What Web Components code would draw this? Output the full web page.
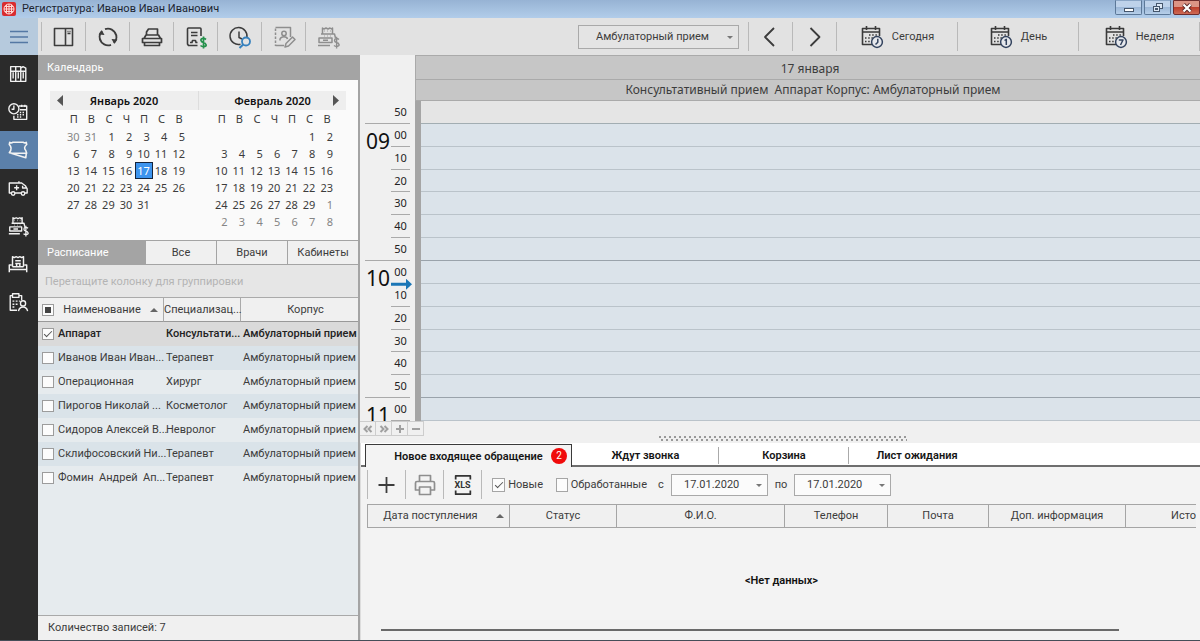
<!DOCTYPE html>
<html lang="ru">
<head>
<meta charset="utf-8">
<meta name="viewport" content="width=device-width, initial-scale=1">
<title>Регистратура</title>
<style>
html, body { height: 100%; margin: 0; }
body { font: 11px/16px Roboto, "Noto Sans", sans-serif; color: #3c3c3c; background: #f0f0f0; }
</style>
</head>
<body>
<registry-app></registry-app>

<script>
const BASE = `
  *, *::before, *::after { box-sizing: border-box; }
  button, input, select { font: inherit; color: inherit; margin: 0; border-radius: 0; }
  button { border: 0; padding: 0; background: none; }
  a { color: inherit; text-decoration: none; }
  table { border-collapse: separate; border-spacing: 0; table-layout: fixed; }
  th, td { padding: 0; font-weight: inherit; }
`;

function define(name, css, html) {
  const template = document.createElement('template');
  customElements.define(name, class extends HTMLElement {
    constructor() {
      super();
      this.attachShadow({ mode: 'open' });
    }
    connectedCallback() {
      const markup = typeof html === 'function' ? html(this) : html;
      template.innerHTML = `<style>${BASE}${css}</style>${markup}`;
      this.shadowRoot.replaceChildren(template.content.cloneNode(true));
    }
  });
}

const calendarIcon = mark => `
  <g stroke="#3a3a3a" stroke-width="1.6"><path d="M12 19.500H2.500V3.500H19.500V11M2.500 7H19.500M6.500 1V5M15.500 1V5"/></g>
  <g stroke="#3a3a3a" stroke-width="1.500" stroke-dasharray="1.500 1.700"><path d="M9 10H17M5 13H13M5 16.500H11"/></g>
  <circle cx="17" cy="17" r="5.400" fill="#e6e8ec" stroke="#33435e" stroke-width="1.500"/>
  <g stroke="#33435e" stroke-width="1.500">${mark}</g>`;

const ICONS = {
  menu: '<path d="M3 6.500H21M3 12H21M3 17.500H21"/>',
  layout: '<path d="M2.500 3.500H20.500V20.500H2.500ZM13.500 3.500V20.500M15.500 6.500H16.500M17.500 6.500H18.500M15.500 8.500H18.500" stroke-width="1.600"/>',
  refresh: '<path d="M5.300 17A8.300 8.300 0 0 1 6 6M9 4.200A8.300 8.300 0 0 1 20 10M18.900 7.200A8.300 8.300 0 0 1 18 18M15 19.800A8.300 8.300 0 0 1 4 14" stroke-width="1.800"/><path d="M2.500 9.500L6 5.500L8.500 10ZM15.500 14L21.500 14.500L18 18.500Z" fill="currentColor" stroke="none"/>',
  printer: '<path d="M6.500 10V7L8.500 4H17.500V10M4 13.500L6 10H18.500L20.500 13.500M2.500 13.500H21.500V17.500H2.500ZM4.500 17.500V20.500H19.500V17.500" stroke-width="1.700"/>',
  invoice: '<path d="M13.500 20.500H4.500L3.500 19V4Q3.500 3 4.500 3H16Q17 3 17 4V11M7 7.500H13.500M7 10.500H13.500M6 17.500H8L8.500 15.500H11.500L12 17.500H13.500" stroke-width="1.600"/><path d="M22 14.500Q20.500 13.200 18.500 13.500T17 15.500T19.300 17.500T22 19.600T19.500 21.700Q17.800 21.700 16.500 20.500M19.500 11.500V23.500" stroke="#25914c" stroke-width="1.700"/>',
  history: '<path d="M18.900 12.500A8.500 8.500 0 1 0 12.500 19.300M11 6.500V12.500L14 14" stroke-width="1.500"/><circle cx="18" cy="16.500" r="4" stroke="#3580bd" stroke-width="1.800"/><path d="M15.200 19.500L11.500 23" stroke="#3580bd" stroke-width="2"/>',
  contact: '<path d="M3.500 3.500V21" stroke-dasharray="2.500 1.500"/><path d="M3.500 2.500H18.500V12M3.500 20.500H12"/><circle cx="12" cy="8.500" r="2.200"/><path d="M8 15.500V14Q9 11.800 12 11.800T15.500 14M13 22L14 18.500L20.500 12L23 14.500L16.500 21Z"/>',
  register: '<path d="M6.500 9V3L8 4L10 3L12 4L14 3L15.500 4L16.500 3V9M5 9H18.500L19.500 13M3 17.500V13H16V17.500ZM2 20.500H14M8 6H8.500M11 6H11.500M14 6H14.500M8 11H8.500M11 11H11.500M14 11H14.500M7 15.300H12" stroke-width="1.500"/><path d="M23 14.500Q21.500 13.300 20 13.600T18.500 15.500T20.500 17.500T23 19.500T20.700 21.500Q19.200 21.500 18 20.500M20.600 11.800V23.500" stroke-width="1.400"/>',
  binders: '<path d="M4 4H9.500V20H4ZM9.500 4H15V20H9.500ZM15 5.500L17.500 4L20.500 5.500V20H15ZM4 9H20.500M6.700 10V17M12.300 10V17M17.700 10V17" stroke-width="1.500"/>',
  clockcal: '<circle cx="7.500" cy="8.500" r="5.500"/><path d="M7.500 5V9H5M13 5.500H21.500V20H7.500V16M14 9.500H21M16 4V6.500M19.500 4V6.500"/><path d="M14 12.500H20M11 15H20M11 17.500H17" stroke-dasharray="1.500 1.500"/>',
  ticket: '<path d="M3 3.500Q4.500 5 6.500 3.500H17.500Q19.500 5 21 3.500L21.500 6Q17.500 9.500 20.500 12.500L21.500 15.500H5.500L2.500 15Q6.500 10 2.500 6ZM4.500 15.500L20.500 20.500L21 16" stroke-width="1.700"/>',
  ambulance: '<path d="M5 17.500H2.500V6.500H16L20 9.500L22 13V17.500H19.500M8.500 17.500H15.500M10.500 9V14.500M7.800 11.700H13.200M13 4.500V6M17 9.500V12H21"/><circle cx="6.700" cy="18" r="1.900"/><circle cx="17.500" cy="18" r="1.900"/>',
  desk: '<path d="M6 15V4L8 5L10 4L12 5L14 4L16 5L18 4V15M2.500 21V13H5M21.500 21V13H19M2.500 18H21.500M9 8.500H15M9 11.500H15M10.500 15V12M14 15V12M6 15H18" stroke-width="1.600"/>',
  patient: '<path d="M11 21H3.500V5H6M13 5H16V10M6 3H13V7H6Z"/><path d="M6 11H14M6 14.500H12M6 17.500H9" stroke-dasharray="2 1.500"/><circle cx="17.500" cy="13.500" r="2.800"/><path d="M12.500 22Q13.500 17.500 17.500 17.500T22.500 22"/>',
  prev: '<path d="M15 3L6 12L15 21" stroke-width="1.800"/>',
  next: '<path d="M7.500 3L16.500 12L7.500 21" stroke-width="1.800"/>',
  today: calendarIcon('<path d="M17.800 13.800V17.300L15.500 19.500"/>'),
  day: calendarIcon('<path d="M15.500 15.500L17.300 14.300V20"/>'),
  week: calendarIcon('<path d="M14.800 15H19L16.500 20"/>'),
  plus: '<path d="M11.500 4V20M3.500 12H19.500" stroke-width="1.800"/>',
  print: '<path d="M6.500 8.500V2.500H17.500V8.500M6.500 17H2.500V10Q2.500 8.500 4 8.500H20Q21.500 8.500 21.500 10V17H17.500M6.500 14H17.500V21.500H6.500Z" stroke-width="1.700"/>',
  sheet: '<path d="M4 6V2H20V6M4 18V22H20V18" stroke-width="1.900"/>'
};

define('ui-icon', `
  :host { display: inline-flex; width: 24px; height: 24px; flex: none; }
  :host([small]) { width: 22px; height: 22px; }
  svg { width: 100%; height: 100%; fill: none; stroke: currentColor; stroke-width: 1.5; stroke-linejoin: round; }
`, el => `<svg viewBox="0 0 24 24" aria-hidden="true">${ICONS[el.getAttribute('name')]}</svg>`);

define('title-bar', `
  :host { display: flex; height: 18px; align-items: center; gap: 6px; padding-left: 2px; background: linear-gradient(#97b3d4, #b2cdea); color: #1c2430; }
  h1 { flex: 1; margin: 0; font: inherit; line-height: 16px; }
  .logo { width: 14px; height: 14px; }
  .controls { display: flex; align-self: start; gap: 2px; }
  button { width: 27px; height: 15px; border: 1px solid #5c7898; border-top-color: #8ba6c6; border-radius: 0 0 2px 2px; background: linear-gradient(#bed2ea 45%, #9db8d8 50%, #b6cfe9); display: grid; place-items: center; }
  .close { border-color: #6e2c2c; background: linear-gradient(#dc9485 45%, #bd3f2c 50%, #cd6a55); }
`, `
  <svg class="logo" viewBox="0 0 14 14" aria-hidden="true"><rect width="14" height="14" rx="2" fill="#d92c30"/><g fill="none" stroke="#ffd9d5" stroke-width="1"><circle cx="7" cy="7" r="5"/><path d="M2 7H12M7 2V12M3 4.500H11M3 9.500H11M4.500 3V11M9.500 3V11"/></g></svg>
  <h1><slot></slot></h1>
  <div class="controls">
    <button aria-label="Свернуть"><svg width="12" height="12"><rect x="1.500" y="6.500" width="9" height="3" fill="#fff" stroke="#45566c"/></svg></button>
    <button aria-label="Восстановить"><svg width="12" height="12"><g fill="#dce7f4" stroke="#45566c"><rect x="4.500" y="1.500" width="6" height="5"/><rect x="1.500" y="4.500" width="6" height="5"/><rect x="3.500" y="6.500" width="2" height="1"/></g></svg></button>
    <button class="close" aria-label="Закрыть"><svg width="12" height="12"><path d="M2.500 2.500L9.500 9.500M9.500 2.500L2.500 9.500" stroke="#5a2a2a" stroke-width="4"/><path d="M2.500 2.500L9.500 9.500M9.500 2.500L2.500 9.500" stroke="#fff" stroke-width="2.200"/></svg></button>
  </div>
`);

define('tool-button', `
  :host { display: flex; width: 44px; border-left: 1px solid #b9b9b9; margin: 4px 0; }
  :host([wide]) { width: 121px; }
  :host([compact]) { width: 38px; margin: 0; }
  :host([muted]) { color: #8e8e8e; }
  button { flex: 1; display: flex; align-items: center; justify-content: center; gap: 8px; }
`, el => `<button aria-label="${el.getAttribute('label')}"><ui-icon name="${el.getAttribute('icon')}"></ui-icon><slot></slot></button>`);

define('tool-bar', `
  :host { display: flex; height: 37px; background: #e2e2e2; }
  .menu { width: 38px; background: #b6cadd; color: #5478a4; display: grid; place-items: center; margin-right: 3px; }
  .spacer { flex: 1; }
  .pick { position: relative; align-self: center; width: 161px; margin-right: 9px; }
  select { appearance: none; width: 100%; height: 24px; padding: 0 17px; border: 1px solid #a9a9a9; background: #e4e4e4; }
  .pick::after { content: ""; position: absolute; right: 6px; top: 11px; border: 3px solid transparent; border-top-color: #777; border-bottom: 0; pointer-events: none; }
  .edge { width: 1px; background: #b9b9b9; margin: 4px 0; }
`, `
  <button class="menu" aria-label="Меню"><ui-icon name="menu"></ui-icon></button>
  <tool-button icon="layout" label="Панели"></tool-button>
  <tool-button icon="refresh" label="Обновить"></tool-button>
  <tool-button icon="printer" label="Печать"></tool-button>
  <tool-button icon="invoice" label="Счет"></tool-button>
  <tool-button icon="history" label="История"></tool-button>
  <tool-button icon="contact" label="Карта пациента" muted></tool-button>
  <tool-button icon="register" label="Касса" muted></tool-button>
  <div class="spacer"></div>
  <div class="pick"><select aria-label="Корпус"><option>Амбулаторный прием</option></select></div>
  <tool-button icon="prev" label="Назад"></tool-button>
  <tool-button icon="next" label="Вперед"></tool-button>
  <tool-button icon="today" label="Сегодня" wide>Сегодня</tool-button>
  <tool-button icon="day" label="День" wide>День</tool-button>
  <tool-button icon="week" label="Неделя" wide>Неделя</tool-button>
  <div class="edge"></div>
`);

define('side-nav', `
  :host { display: block; width: 38px; background: #2b2b2b; color: #f2f2f2; }
  nav { display: flex; flex-direction: column; }
  a { height: 38px; display: grid; place-items: center; padding-right: 2px; }
  a[aria-current] { background: #5b80aa; }
`, `<nav>${[['binders', 'Картотека'], ['clockcal', 'Планирование'], ['ticket', 'Регистратура'], ['ambulance', 'Скорая помощь'], ['register', 'Касса'], ['desk', 'Стационар'], ['patient', 'Пациенты']]
  .map(([icon, label]) => `<a href="#${icon}" aria-label="${label}" ${icon === 'ticket' ? 'aria-current="page"' : ''}><ui-icon small name="${icon}"></ui-icon></a>`).join('')}</nav>`);

/* A month grid: "lead" days of the previous month, "blank" empty cells, "trail" days of the next one. */
define('month-calendar', `
  :host { display: block; flex: 1; font-family: "Noto Sans", "Open Sans", sans-serif; }
  header { display: flex; justify-content: center; position: relative; height: 19px; background: #eee; font-weight: 600; line-height: 19px; color: #111; }
  :host([step="next"]) header { border-left: 1px solid #ddd; }
  header button { position: absolute; top: 4px; width: 6px; height: 11px; background: #555; }
  :host([step="prev"]) header button { left: 7px; clip-path: polygon(0 50%, 100% 0, 100% 100%); }
  :host([step="next"]) header button { right: 7px; clip-path: polygon(100% 50%, 0 0, 0 100%); }
  table { width: 123px; margin: 0 auto 0 15px; }
  th { height: 18px; line-height: 15px; padding-bottom: 2px; text-align: center; }
  td { height: 17px; line-height: 15px; text-align: right; padding-right: 2px; border: 1px solid transparent; white-space: nowrap; }
  .other { color: #858585; }
  .current { background: #3d94ee; border-color: #14243c; color: #fff; }
`, el => {
  const n = key => Number(el.getAttribute(key) || 0);
  const cells = [];
  for (let i = n('lead') - 1; i >= 0; i--) cells.push(['other', 31 - i]);
  for (let i = 0; i < n('blank'); i++) cells.push(['', '']);
  for (let d = 1; d <= n('days'); d++) cells.push([d === n('current') ? 'current' : '', d]);
  for (let d = 1; d <= n('trail'); d++) cells.push(['other', d]);
  let rows = '';
  for (let i = 0; i < cells.length; i += 7) rows += `<tr>${cells.slice(i, i + 7).map(([c, d]) => `<td class="${c}">${d}</td>`).join('')}</tr>`;
  return `<header>${el.getAttribute('title-text')}<button aria-label="Другой месяц"></button></header>
    <table><thead><tr>${[...'ПВСЧПСВ'].map(c => `<th>${c}</th>`).join('')}</tr></thead><tbody>${rows}</tbody></table>`;
});

define('schedule-list', `
  :host { display: flex; flex-direction: column; flex: 1; background: #e6ebee; }
  .tabs { display: flex; height: 25px; background: #a4a4a4; padding: 1px 0; gap: 1px; }
  h2 { flex: 1; margin: 0; padding-left: 9px; font: inherit; line-height: 23px; color: #fff; }
  .tabs button { width: 70px; background: #f0f0f0; }
  .group { height: 33px; line-height: 33px; padding-left: 7px; background: #e6e6e6; color: #b4b4b4; border-bottom: 1px solid #aaa; }
  table { width: 100%; }
  th { height: 24px; background: #f0f0f0; border-bottom: 1px solid #999; border-right: 1px solid #aaa; text-align: center; white-space: nowrap; }
  th:last-child { border-right: 0; padding-left: 12px; }
  .name { display: flex; align-items: center; padding: 0 5px 0 4px; }
  .name span { flex: 1; }
  .sort { border: 4px solid transparent; border-bottom: 4px solid #666; border-top: 0; }
  td { height: 24px; padding-left: 2px; white-space: nowrap; }
  tbody tr:nth-child(even) { background: #dae3e9; }
  tbody tr:first-child { background: #dadada; color: #222; font-weight: 500; }
  label { display: flex; align-items: center; gap: 4px; padding-left: 2px; white-space: pre; }
  input { appearance: none; width: 12px; height: 12px; flex: none; border: 1px solid #9c9c9c; background: #fcfcfc; display: grid; place-items: center; }
  input:checked::after { content: ""; width: 8px; height: 4px; border: 1px solid #555; border-top: 0; border-right: 0; transform: translateY(-1px) rotate(-45deg); }
  input.some::after { content: ""; width: 6px; height: 6px; background: #444; }
  footer { margin-top: auto; height: 25px; line-height: 24px; padding-left: 10px; background: #f0f0f0; border-top: 1px solid #a9a9a9; }
`, () => {
  const rows = [['Аппарат', 'Консультати...'], ['Иванов Иван Иван...', 'Терапевт'], ['Операционная', 'Хирург'], ['Пирогов Николай ...', 'Косметолог'], ['Сидоров Алексей В...', 'Невролог'], ['Склифосовский Ни...', 'Терапевт'], ['Фомин  Андрей  Ап...', 'Терапевт']];
  return `<div class="tabs"><h2>Расписание</h2><button>Все</button><button>Врачи</button><button>Кабинеты</button></div>
  <div class="group">Перетащите колонку для группировки</div>
  <table><colgroup><col style="width:126px"><col style="width:77px"><col></colgroup>
    <thead><tr><th><div class="name"><input class="some" type="checkbox" aria-label="Выбрать все"><span>Наименование</span><i class="sort"></i></div></th><th>Специализац...</th><th>Корпус</th></tr></thead>
    <tbody>${rows.map(([name, job], i) => `<tr><td><label><input type="checkbox" ${i ? '' : 'checked'}><span>${name}</span></label></td><td>${job}</td><td>Амбулаторный прием</td></tr>`).join('')}</tbody>
  </table>
  <footer>Количество записей: 7</footer>`;
});

define('left-panel', `
  :host { display: flex; flex-direction: column; width: 322px; border-right: 2px solid #a4a4a4; }
  h2 { margin: 0; height: 25px; padding-left: 9px; font: inherit; line-height: 25px; background: #a4a4a4; color: #fff; }
  .months { display: flex; height: 160px; padding: 11px 12px 0; background: #fafafa; }
`, `
  <h2>Календарь</h2>
  <div class="months">
    <month-calendar step="prev" title-text="Январь 2020" lead="2" days="31" current="17"></month-calendar>
    <month-calendar step="next" title-text="Февраль 2020" blank="5" days="29" trail="8"></month-calendar>
  </div>
  <schedule-list></schedule-list>
`);

define('day-planner', `
  :host { display: flex; flex-direction: column; flex: 1; min-height: 366px; background: #f0f0f0; font-family: "Noto Sans", "Open Sans", sans-serif; }
  header { margin-left: 55px; background: #c6c6c6; text-align: center; font-size: 12px; border-left: 1px solid #aaa; }
  header div { border-bottom: 1px solid #aaa; white-space: pre; }
  .date { height: 25px; line-height: 26px; padding-left: 4px; border-top: 1px solid #aaa; }
  .room { height: 21px; line-height: 20px; padding-left: 10px; }
  .body { flex: 1; display: grid; grid-template-columns: 55px 6px 1fr; grid-template-rows: minmax(0, 1fr); overflow: hidden; }
  .ruler { display: grid; grid-template-columns: 26px 19px; grid-template-rows: repeat(14, minmax(0, 1fr)); padding-left: 5px; color: #222; }
  .ruler > * { border-bottom: 1px solid #aaa; contain: size; }
  .hour { grid-column: 1; font-size: 21px; line-height: 34px; padding-left: 1px; color: #111; overflow: hidden; }
  .hour.cut { border: 0; }
  .minute { grid-column: 2; line-height: 22px; text-align: center; position: relative; }
  .minute.now::after { content: ""; position: absolute; left: 0; bottom: -7px; width: 21px; height: 11px; background: #1b76b6; clip-path: polygon(0 4px, 15px 4px, 15px 0, 100% 50%, 15px 11px, 15px 7px, 0 7px); }
  .bar { background: #a5a5a5; }
  .slots { display: grid; grid-template-rows: repeat(14, minmax(0, 1fr)); background: #dbe3ea; }
  .slots div { border-bottom: 1px solid #bac3ca; }
  .slots .shut { background: #e5e5e5; border-color: #a2adb2; }
  .slots .full { border-color: #9aa3ab; }
`, () => {
  let ruler = '<div class="hour" style="grid-row:1"></div><div class="minute" style="grid-row:1">50</div>';
  [['09', 2], ['10', 8]].forEach(([hour, row]) => {
    ruler += `<div class="hour" style="grid-row:${row} / span 6">${hour}</div>`;
    ['00', '10', '20', '30', '40', '50'].forEach((m, i) => {
      ruler += `<div class="minute ${hour === '10' && m === '00' ? 'now' : ''}" style="grid-row:${row + i}">${m}</div>`;
    });
  });
  ruler += '<div class="hour cut" style="grid-row:14">11</div><div class="minute" style="grid-row:14">00</div>';
  const slots = Array.from({ length: 14 }, (_, i) => `<div class="${i === 0 ? 'shut' : i % 6 === 0 ? 'full' : ''}"></div>`).join('');
  return `<header><div class="date">17 января</div><div class="room">Консультативный прием  Аппарат Корпус: Амбулаторный прием</div></header>
    <div class="body"><div class="ruler">${ruler}</div><div class="bar"></div><div class="slots">${slots}</div></div>`;
});

define('planner-splitter', `
  :host { display: flex; height: 22px; background: #f0f0f0; position: relative; }
  .steps { display: flex; }
  button { width: 16px; height: 15px; border: 1px solid #cdcdcd; border-left: 0; color: #a0a0a0; display: grid; place-items: center; }
  svg { fill: none; stroke: currentColor; stroke-width: 2; }
  .grip { position: absolute; left: 50%; bottom: 2px; width: 248px; height: 5px; transform: translateX(-50%);
    margin-left: 3px; background: radial-gradient(circle at 1px 1px, #999 1px, transparent 1px) 0 0 / 5px 5px, radial-gradient(circle at 1px 1px, #999 1px, transparent 1px) 2px 3px / 5px 5px; }
`, `
  <div class="steps">
    <button aria-label="Раньше"><svg width="10" height="8"><path d="M4.500 1L1.500 4L4.500 7M8.500 1L5.500 4L8.500 7"/></svg></button>
    <button aria-label="Позже"><svg width="10" height="8"><path d="M1.500 1L4.500 4L1.500 7M5.500 1L8.500 4L5.500 7"/></svg></button>
    <button aria-label="Увеличить"><svg width="10" height="8"><path d="M5 0V8M1 4H9"/></svg></button>
    <button aria-label="Уменьшить"><svg width="10" height="8"><path d="M1 4H9"/></svg></button>
  </div>
  <div class="grip"></div>
`);

define('date-field', `
  :host { display: block; position: relative; width: 97px; }
  input { width: 100%; height: 22px; padding: 0 12px; border: 1px solid #a9a9a9; background: #fbfbfb; }
  :host::after { content: ""; position: absolute; right: 6px; top: 10px; border: 3px solid transparent; border-top-color: #777; border-bottom: 0; pointer-events: none; }
`, el => `<input type="text" aria-label="${el.getAttribute('label')}" value="${el.getAttribute('value')}">`);

define('requests-panel', `
  :host { display: flex; flex-direction: column; min-height: 197px; background: #f3f3f3; border-left: 1px solid #ddd; }
  .tabs { display: flex; height: 24px; padding: 1px 0 0 4px; background: linear-gradient(#6e6e6e, #6e6e6e) 0 100% / 100% 2px no-repeat #fff; }
  .tabs button { position: relative; font-weight: 600; color: #151515; line-height: 22px; padding-top: 1px; }
  .tabs .active { width: 207px; background: #f3f3f3; border: 1px solid #3a3a3a; border-bottom: 0; }
  .badge { position: absolute; right: 4px; top: 3px; width: 16px; height: 16px; border-radius: 50%; background: #f00a0a; color: #fff; font-size: 10px; line-height: 16px; font-weight: 400; }
  .line::after { content: ""; position: absolute; right: 0; top: 3px; height: 17px; border-right: 1px solid #aaa; }
  .tools { display: flex; align-items: center; height: 29px; margin: 3px 0 5px 6px; }
  .tools tool-button { align-self: stretch; }
  .xls { position: relative; width: 39px; align-self: stretch; border: 1px solid #b9b9b9; border-width: 0 1px; color: #333; display: grid; place-items: center; }
  .xls ui-icon, .xls b { grid-area: 1 / 1; }
  .xls b { font-size: 9px; line-height: 10px; }
  label { display: flex; align-items: center; gap: 3px; }
  .new { margin-left: 10px; width: 51px; }
  .done { margin-left: 13px; width: 91px; }
  label input { appearance: none; width: 14px; height: 14px; border: 1px solid #a5a5a5; background: #fcfcfc; display: grid; place-items: center; }
  input:checked::after { content: ""; width: 8px; height: 4px; border: 1px solid #555; border-top: 0; border-right: 0; transform: translateY(-1px) rotate(-45deg); }
  .from { width: 24px; padding-left: 11px; box-sizing: border-box; }
  .to { width: 26px; text-align: center; }
  .data { flex: 1; display: flex; flex-direction: column; margin: 0 4px 0 6px; }
  table { width: 100%; border-left: 1px solid #a5a5a5; }
  th { height: 24px; border: 1px solid #a5a5a5; border-left: 0; background: #f0f0f0; text-align: center; white-space: nowrap; overflow: hidden; }
  th:last-child { border-right: 0; text-align: right; }
  .sorted { padding-right: 16px; position: relative; }
  .sorted::after { content: ""; position: absolute; right: 5px; top: 9px; border: 4px solid transparent; border-bottom-color: #666; border-top: 0; }
  .empty { flex: 1; margin: 0; display: grid; place-items: center; padding-top: 4px; font-weight: 600; color: #111; }
  .scroll { height: 2px; margin: 0 81px 9px 20px; background: #6a6a6a; }
`, `
  <div class="tabs">
    <button class="active">Новое входящее обращение<span class="badge">2</span></button>
    <button class="line" style="width:147px">Ждут звонка</button>
    <button class="line" style="width:130px">Корзина</button>
    <button style="width:136px">Лист ожидания</button>
  </div>
  <div class="tools">
    <tool-button compact icon="plus" label="Добавить"></tool-button>
    <tool-button compact muted icon="print" label="Печать"></tool-button>
    <button class="xls"><ui-icon small name="sheet"></ui-icon><b>XLS</b></button>
    <label class="new"><input type="checkbox" checked>Новые</label>
    <label class="done"><input type="checkbox">Обработанные</label>
    <span class="from">с</span><date-field label="Дата с" value="17.01.2020"></date-field>
    <span class="to">по</span><date-field label="Дата по" value="17.01.2020"></date-field>
  </div>
  <div class="data">
    <table>
      <colgroup><col style="width:142px"><col style="width:107px"><col style="width:168px"><col style="width:103px"><col style="width:101px"><col style="width:137px"><col></colgroup>
      <thead><tr><th class="sorted">Дата поступления</th><th>Статус</th><th>Ф.И.О.</th><th>Телефон</th><th>Почта</th><th>Доп. информация</th><th>Исто</th></tr></thead>
    </table>
    <p class="empty">&lt;Нет данных&gt;</p>
  </div>
  <div class="scroll"></div>
`);

define('registry-app', `
  :host { display: flex; flex-direction: column; min-height: 100%; border-bottom: 1px solid #454d58; box-sizing: border-box; }
  .main { flex: 1; display: flex; }
  .work { flex: 1; min-width: 0; display: flex; flex-direction: column; }
`, `
  <title-bar>Регистратура: Иванов Иван Иванович</title-bar>
  <tool-bar></tool-bar>
  <div class="main">
    <side-nav></side-nav>
    <left-panel></left-panel>
    <div class="work">
      <day-planner></day-planner>
      <planner-splitter></planner-splitter>
      <requests-panel></requests-panel>
    </div>
  </div>
`);
</script>
</body>
</html>
